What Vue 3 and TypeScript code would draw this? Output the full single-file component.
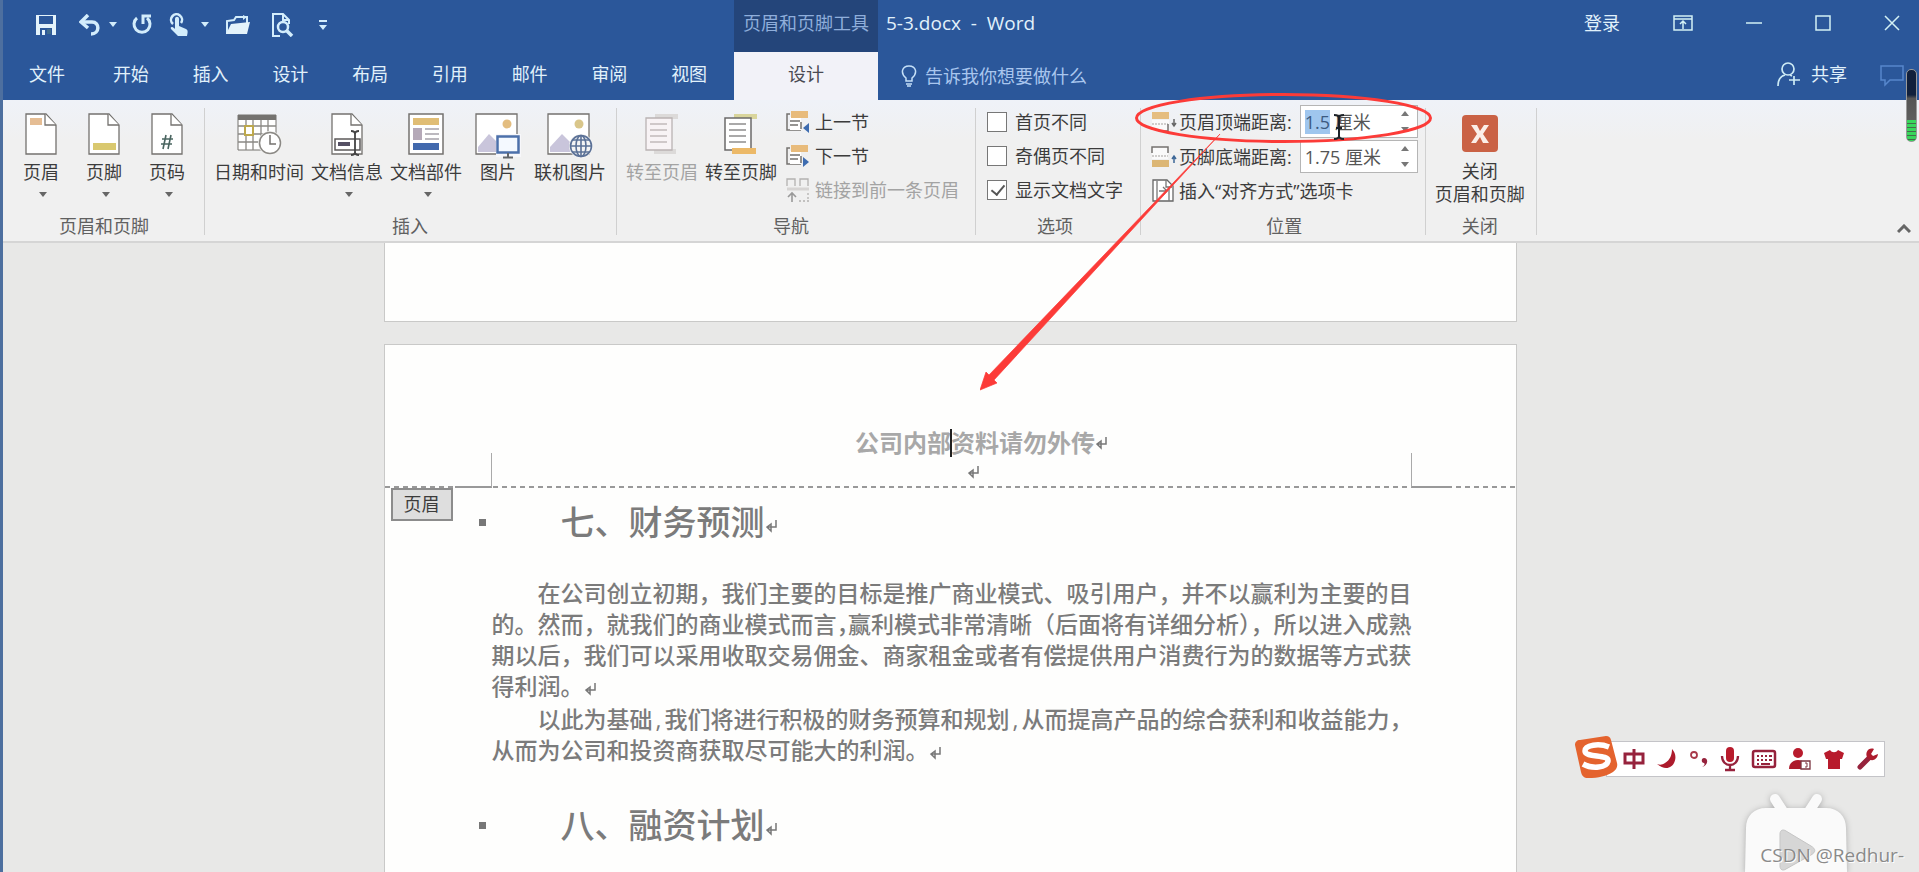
<script setup lang="ts">
import { onMounted, ref } from 'vue'

const tabs: string[] = ['开始', '插入', '设计', '布局', '引用', '邮件', '审阅', '视图']
const headerDistance = ref('1.5 厘米')
const footerDistance = ref('1.75 厘米')
const firstDifferent = ref(false)
const oddEvenDifferent = ref(false)
const showText = ref(true)
const headerInput = ref<HTMLInputElement | null>(null)

function step(value: string, delta: number): string {
  return `${Math.round((parseFloat(value) + delta) * 100) / 100} 厘米`
}

onMounted(() => {
  headerInput.value?.focus()
  headerInput.value?.setSelectionRange(0, 3)
})
</script>

<template>
  <div class="app">
    <header class="top">
      <div class="quick">
        <button class="tool save" aria-label="保存">
          <svg width="22" height="22" viewBox="0 0 22 22"><path d="M1 1h20v20H1z" fill="#e4f3fb" /><path d="M4 2h14v8H4zM5 14h12v7H5z" fill="#2b579a" /><path d="M7 16h3v5H7z" fill="#e4f3fb" /><path d="M12 15h4v5h-4z" fill="#3f6a8c" /></svg>
        </button>
        <button class="tool undo" aria-label="撤消">
          <svg width="22" height="22" viewBox="0 0 22 22" fill="none" stroke="#d3edfc" stroke-width="3.500"><path d="M2 8h11c8 0 8 12-1 12" /><path d="M9 1L2 8l7 6" /></svg>
        </button>
        <button class="tool" aria-label="撤消选项"><svg width="10" height="6" viewBox="0 0 10 6"><path d="M1 0h8L5 5z" fill="#d3edfc" /></svg></button>
        <button class="tool redo" aria-label="重复">
          <svg width="22" height="22" viewBox="0 0 22 22" fill="none" stroke="#d3edfc" stroke-width="3"><path d="M6 4a8 8 0 1 0 10 0" /><path d="M12 10V2h8" /></svg>
        </button>
        <button class="tool touch" aria-label="触摸/鼠标模式">
          <svg width="20" height="24" viewBox="0 0 20 24"><path d="M4 11a5.500 5.500 0 1 1 8-1" fill="none" stroke="#d3edfc" stroke-width="2.500" /><path d="M6 6c0-3 4-3 4 0v7l7 3c2 1 2 3 1 7H9l-7-7c-1-2 1-3 4 0z" fill="#d3edfc" /></svg>
        </button>
        <button class="tool" aria-label="触摸选项"><svg width="10" height="6" viewBox="0 0 10 6"><path d="M1 0h8L5 5z" fill="#d3edfc" /></svg></button>
        <button class="tool open" aria-label="打开">
          <svg width="26" height="22" viewBox="0 0 26 22"><path d="M2 20V7l7-1 2-3h11v6" fill="none" stroke="#d3edfc" stroke-width="2" /><path d="M6 10l19-2-3 12H1z" fill="#e4f3fb" /><path d="M18 1l4 2-4 3" fill="#d3edfc" /></svg>
        </button>
        <button class="tool preview" aria-label="打印预览">
          <svg width="24" height="24" viewBox="0 0 24 24" fill="none" stroke="#d3edfc" stroke-width="2"><path d="M9 23H2V1h10l6 6v4M12 1v6h6" /><circle cx="12" cy="14" r="5" stroke-width="2.500" /><path d="M16 18l5 5" stroke-width="3.500" /></svg>
        </button>
        <button class="tool" aria-label="自定义快速访问工具栏"><svg width="10" height="12" viewBox="0 0 10 12"><path d="M1 1h8v2H1zM1 6h8l-4 5z" fill="#d3edfc" /></svg></button>
      </div>
      <div class="context">页眉和页脚工具</div>
      <div class="caption">
        <span class="doc-name">5-3.docx&nbsp; -&nbsp; Word</span>
        <button class="login">登录</button>
        <button class="win" aria-label="功能区显示选项"><svg width="20" height="16" viewBox="0 0 20 16" fill="none" stroke="#d3f1f5" stroke-width="1.500"><path d="M1 1h18v14H1zM1 4h18M10 14V6M7 9l3-3 3 3" /></svg></button>
        <button class="win" aria-label="最小化"><svg width="16" height="16" viewBox="0 0 16 16"><path d="M0 8h16" stroke="#d3f1f5" stroke-width="1.500" /></svg></button>
        <button class="win" aria-label="最大化"><svg width="16" height="16" viewBox="0 0 16 16"><path d="M1 1h14v14H1z" fill="none" stroke="#d3f1f5" stroke-width="1.500" /></svg></button>
        <button class="win" aria-label="关闭窗口"><svg width="16" height="16" viewBox="0 0 16 16"><path d="M1 1l14 14M15 1L1 15" stroke="#d3f1f5" stroke-width="1.500" /></svg></button>
      </div>

      <nav class="tabs">
        <button class="tab file">文件</button>
        <div class="tab-row">
          <button v-for="tab in tabs" :key="tab" class="tab">{{ tab }}</button>
        </div>
      </nav>
      <button class="tab active">设计</button>
      <div class="tell-row">
        <button class="tell">
          <svg width="16" height="22" viewBox="0 0 16 22" fill="none" stroke="#c5e0f8" stroke-width="1.500"><path d="M5 16v-3C-1 8 1 1 8 1s9 7 3 12v3zM5 19h6M6 21h4" /></svg>
          告诉我你想要做什么
        </button>
        <button class="share">
          <svg width="24" height="24" viewBox="0 0 24 24" fill="none" stroke="#cdebf5" stroke-width="1.700"><circle cx="11" cy="7" r="6" /><path d="M1 24c0-7 3-10 7-11M13 13l2 1M17 14v9M12 18h11" /></svg>
          共享
        </button>
        <button class="comment" aria-label="批注"><svg width="24" height="22" viewBox="0 0 24 22"><path d="M1 1h22v14H10l-5 5v-5H1z" fill="none" stroke="#5787cc" stroke-width="1.500" /></svg></button>
      </div>
    </header>

    <section class="ribbon">
      <div class="group g-hf">
        <div class="body">
          <button class="big">
            <svg width="32" height="42" viewBox="0 0 32 42"><path d="M1 1h20l10 11v29H1z" fill="#fff" stroke="#74726f" stroke-width="1.300" /><path d="M20 1v11h11" fill="#fff" stroke="#74726f" stroke-width="1.300" /><path d="M5 5h12v7H5z" fill="#e5bd94" /></svg>
            <span>页眉</span><i class="caret"></i>
          </button>
          <button class="big">
            <svg width="32" height="42" viewBox="0 0 32 42"><path d="M1 1h20l10 11v29H1z" fill="#fff" stroke="#74726f" stroke-width="1.300" /><path d="M20 1v11h11" fill="#fff" stroke="#74726f" stroke-width="1.300" /><path d="M5 30h23v7H5z" fill="#d9c86f" /></svg>
            <span>页脚</span><i class="caret"></i>
          </button>
          <button class="big">
            <svg width="32" height="42" viewBox="0 0 32 42"><path d="M1 1h20l10 11v29H1z" fill="#fff" stroke="#74726f" stroke-width="1.300" /><path d="M20 1v11h11" fill="#fff" stroke="#74726f" stroke-width="1.300" /><path d="M15 22l-3 14M20 22l-3 14M11 26h11M10 31h11" stroke="#4a6560" stroke-width="1.600" /></svg>
            <span>页码</span><i class="caret"></i>
          </button>
        </div>
        <div class="title">页眉和页脚</div>
      </div>

      <div class="group g-insert">
        <div class="body">
          <button class="big">
            <svg width="44" height="42" viewBox="0 0 44 42"><path d="M1 2h38v35H1z" fill="#fff" stroke="#74726f" /><path d="M1 2h38v5H1z" fill="#74726f" /><path d="M9 7v30M16 7v30M24 7v30M31 7v30M1 13h38M1 21h38M1 29h38" stroke="#8b8985" stroke-width="1.300" /><path d="M8 13h8v9H8z" fill="#fff" stroke="#bda84c" stroke-width="2" /><circle cx="33" cy="30" r="12" fill="#f2f2f0" /><circle cx="33" cy="30" r="10.500" fill="#fff" stroke="#8b8985" stroke-width="1.500" /><path d="M33 22v9h6" fill="none" stroke="#74726f" stroke-width="1.500" /></svg>
            <span>日期和时间</span>
          </button>
          <button class="big">
            <svg width="32" height="42" viewBox="0 0 32 42"><path d="M1 1h20l10 11v29H1z" fill="#fff" stroke="#74726f" stroke-width="1.300" /><path d="M20 1v11h11" fill="#fff" stroke="#74726f" stroke-width="1.300" /><path d="M4 26h25v11H4z" fill="#fff" stroke="#5c5a5a" stroke-width="1.500" /><path d="M7 29h12v4H7z" fill="#555064" /><path d="M24 20v20M20 18c3 0 4 1 4 3 0-2 1-3 4-3M20 42c3 0 4-1 4-3 0 2 1 3 4 3" fill="none" stroke="#444" stroke-width="1.800" /></svg>
            <span>文档信息</span><i class="caret"></i>
          </button>
          <button class="big">
            <svg width="36" height="42" viewBox="0 0 36 42"><path d="M1 1h34v40H1z" fill="#fff" stroke="#74726f" stroke-width="1.500" /><path d="M5 5h26v7H5z" fill="#e0bd75" /><path d="M5 15h9v12H5z" fill="#b5a9b8" /><path d="M17 16h14M17 21h14M17 26h14" stroke="#a6a3aa" stroke-width="1.500" /><path d="M5 30h26v7H5z" fill="#4269ad" /></svg>
            <span>文档部件</span><i class="caret"></i>
          </button>
          <button class="big">
            <svg width="46" height="46" viewBox="0 0 46 46"><path d="M1 1h41v40H1z" fill="#fff" stroke="#74726f" stroke-width="1.300" /><circle cx="32" cy="11" r="4.500" fill="#e3bd80" /><path d="M3 39V34L14 21l9 9v9z" fill="#c9c5db" /><path d="M21 21h25v23H21z" fill="#f7f7fa" /><path d="M22.500 23.500h21v16h-21z" fill="#f4f9ff" stroke="#4c70aa" stroke-width="2.500" /><path d="M33 40v4M28 44.500h10" stroke="#63666a" stroke-width="2" /></svg>
            <span>图片</span>
          </button>
          <button class="big">
            <svg width="46" height="46" viewBox="0 0 46 46"><path d="M1 1h41v40H1z" fill="#fff" stroke="#74726f" stroke-width="1.300" /><circle cx="32" cy="11" r="4.500" fill="#d9c68a" /><path d="M3 39V34L15 21l12 12v6z" fill="#c9c5db" /><circle cx="34" cy="33" r="12" fill="#f4f4f4" /><g fill="none" stroke="#5b7197" stroke-width="1.600"><circle cx="34" cy="33" r="10.500" /><ellipse cx="34" cy="33" rx="5" ry="10.500" /><path d="M23.500 33h21M34 22.500v21M25.500 27h17M25.500 39h17" /></g></svg>
            <span>联机图片</span>
          </button>
        </div>
        <div class="title">插入</div>
      </div>

      <div class="group g-nav">
        <div class="body">
          <button class="big" disabled>
            <svg width="34" height="42" viewBox="0 0 34 42"><path d="M10 1h23v5H10zM9 36h22v5H9z" fill="#dcdad9" /><path d="M1 5h26v32H1z" fill="#f8f3f5" stroke="#b9b3b3" stroke-width="1.300" /><path d="M5 11h17M5 17h17M5 23h17M5 29h17" stroke="#c1bbbb" stroke-width="1.300" /></svg>
            <span>转至页眉</span>
          </button>
          <button class="big">
            <svg width="34" height="42" viewBox="0 0 34 42"><path d="M10 1h23v5H10z" fill="#d9d59c" /><path d="M1 5h26v32H1z" fill="#fff" stroke="#6b6969" stroke-width="1.500" /><path d="M5 11h17M5 17h17M5 23h17M5 29h17" stroke="#8f8d8d" stroke-width="1.300" /><path d="M8 35h24v6H8z" fill="#ecb968" /></svg>
            <span>转至页脚</span>
          </button>
          <div class="rows nav-rows">
            <button class="small">
              <svg width="24" height="24" viewBox="0 0 24 24"><path d="M4 4H1v16h14" fill="none" stroke="#74726f" stroke-width="1.500" /><path d="M4 7h11v13H4z" fill="#fff" /><path d="M4 11h10M4 15h8M15 12v7" stroke="#74726f" stroke-width="1.500" /><path d="M5 1h17v7H5z" fill="#e8bb7b" /><path d="M23 13v10l-6-5z" fill="#3e6cb0" /></svg>
              上一节
            </button>
            <button class="small">
              <svg width="24" height="24" viewBox="0 0 24 24"><path d="M4 4H1v16h14" fill="none" stroke="#74726f" stroke-width="1.500" /><path d="M4 7h11v13H4z" fill="#fff" /><path d="M4 11h10M4 15h8M15 12v7" stroke="#74726f" stroke-width="1.500" /><path d="M5 1h17v7H5z" fill="#e8bb7b" /><path d="M17 13v10l6-5z" fill="#3e6cb0" /></svg>
              下一节
            </button>
            <button class="small" disabled>
              <svg width="24" height="26" viewBox="0 0 24 26" fill="none" stroke="#b3b1b0" stroke-width="1.300"><path d="M1 9V2h8v7M14 9V2h8v7" /><path d="M1 12h22" stroke="#d6d4d3" stroke-width="3" /><path d="M6 25v-8M2 20l4-4 4 4" stroke="#999" stroke-width="1.600" /><path d="M13 24h10M22 16v8" stroke-dasharray="2 2" /></svg>
              链接到前一条页眉
            </button>
          </div>
        </div>
        <div class="title">导航</div>
      </div>

      <div class="group g-opt">
        <div class="body">
          <div class="rows">
            <label class="check"><input v-model="firstDifferent" type="checkbox" />首页不同</label>
            <label class="check"><input v-model="oddEvenDifferent" type="checkbox" />奇偶页不同</label>
            <label class="check"><input v-model="showText" type="checkbox" />显示文档文字</label>
          </div>
        </div>
        <div class="title">选项</div>
      </div>

      <div class="group g-pos">
        <div class="body">
          <div class="rows">
            <div class="field">
              <label for="header-distance">
                <svg width="26" height="24" viewBox="0 0 26 24"><path d="M1 2h17v7H1z" fill="#e5bd80" /><path d="M1 10h17v11H1z" fill="#fafafa" /><path d="M1 14h16" stroke="#a5a29f" stroke-dasharray="2 1" /><path d="M17 14v7h-4" fill="none" stroke="#74726f" stroke-width="1.500" /><path d="M23 9v7M21 13l2 3 2-3" fill="none" stroke="#666" stroke-width="1.500" /></svg>
                页眉顶端距离:
              </label>
              <div class="spin">
                <input id="header-distance" ref="headerInput" v-model="headerDistance" type="text" />
                <div class="arrows">
                  <button aria-label="增大页眉距离" @click="headerDistance = step(headerDistance, 0.1)"><i class="up"></i></button>
                  <button aria-label="减小页眉距离" @click="headerDistance = step(headerDistance, -0.1)"><i class="down"></i></button>
                </div>
              </div>
            </div>
            <div class="field">
              <label for="footer-distance">
                <svg width="26" height="24" viewBox="0 0 26 24"><path d="M1 2h16v12H1z" fill="#fafafa" /><path d="M1 8V2h16v6" fill="none" stroke="#74726f" stroke-width="1.500" /><path d="M1 11h16" stroke="#a5a29f" stroke-dasharray="2 1" /><path d="M1 15h17v7H1z" fill="#dcb674" /><path d="M23 18v-7M21 14l2-3 2 3" fill="none" stroke="#3d6797" stroke-width="1.500" /></svg>
                页脚底端距离:
              </label>
              <div class="spin">
                <input id="footer-distance" v-model="footerDistance" type="text" />
                <div class="arrows">
                  <button aria-label="增大页脚距离" @click="footerDistance = step(footerDistance, 0.1)"><i class="up"></i></button>
                  <button aria-label="减小页脚距离" @click="footerDistance = step(footerDistance, -0.1)"><i class="down"></i></button>
                </div>
              </div>
            </div>
            <button class="small align">
              <svg width="26" height="24" viewBox="0 0 26 24"><path d="M2 1h14l6 6v15H2z" fill="#fff" stroke="#666" stroke-width="1.300" /><path d="M15 1v7h6M6 2v20M18 8v14M8 12h7M12 8l4 4-4 4" fill="none" stroke="#777" stroke-width="1.300" /></svg>
              插入“对齐方式”选项卡
            </button>
          </div>
        </div>
        <div class="title">位置</div>
      </div>

      <div class="group g-close">
        <div class="body">
          <button class="big close">
            <svg width="36" height="42" viewBox="0 0 36 42"><rect y="2" width="36" height="37" rx="4" fill="#ca6245" /><path d="M9 12h6l3 6 4-6h5l-6 9 6 9h-6l-3-6-4 6H9l6-9z" fill="#fbeee8" /></svg>
            <span>关闭</span><span>页眉和页脚</span>
          </button>
        </div>
        <div class="title">关闭</div>
      </div>
      <button class="collapse" aria-label="折叠功能区"><svg width="14" height="10" viewBox="0 0 14 10"><path d="M1 8l6-6 6 6" fill="none" stroke="#666" stroke-width="3" /></svg></button>
    </section>

    <main class="canvas">
      <article class="page previous"></article>
      <article class="page current">
        <div class="head-area">
          <p class="head-text">公司内部<i class="cursor"></i>资料请勿外传<svg class="mark" viewBox="0 0 12 12"><path d="M11 0v7H3M6 4L2 7l4 4V4z" /></svg></p>
          <p class="head-blank"><svg class="mark" viewBox="0 0 12 12"><path d="M11 0v7H3M6 4L2 7l4 4V4z" /></svg></p>
          <i class="corner left"></i><i class="corner right"></i>
        </div>
        <span class="tag">页眉</span>
        <section class="content">
          <h2>七、财务预测<svg class="mark" viewBox="0 0 12 12"><path d="M11 0v7H3M6 4L2 7l4 4V4z" /></svg></h2>
          <div class="prose">
            <p>在公司创立初期，我们主要的目标是推广商业模式、吸引用户，并不以赢利为主要的目<br />的。然而，就我们的商业模式而言<span class="tight">，</span>赢利模式非常清晰（后面将有详细分析），所以进入成熟<br />期以后，我们可以采用收取交易佣金、商家租金或者有偿提供用户消费行为的数据等方式获<br />得利润。<svg class="mark" viewBox="0 0 12 12"><path d="M11 0v7H3M6 4L2 7l4 4V4z" /></svg></p>
            <p>以此为基础<span class="comma">,</span>我们将进行积极的财务预算和规划<span class="comma">,</span>从而提高产品的综合获利和收益能力，<br />从而为公司和投资商获取尽可能大的利润。<svg class="mark" viewBox="0 0 12 12"><path d="M11 0v7H3M6 4L2 7l4 4V4z" /></svg></p>
          </div>
          <h2>八、融资计划<svg class="mark" viewBox="0 0 12 12"><path d="M11 0v7H3M6 4L2 7l4 4V4z" /></svg></h2>
        </section>
      </article>
    </main>

    <svg class="annotation" width="460" height="310" viewBox="980 90 460 310">
      <ellipse cx="1283.500" cy="118" rx="147" ry="23.500" fill="none" stroke="#fc3b38" stroke-width="3" />
      <path d="M1220 134L989 375l-3-3-6 18 17-7-3-3z" fill="#fc3b38" stroke="#fc3b38" stroke-width=".7" />
      <path d="M1334 115c3 0 5 1 5 3v18c0 2-2 3-5 3M1344 115c-3 0-5 1-5 3M1339 136c0 2 2 3 5 3M1336 128h6" fill="none" stroke="#1d2228" stroke-width="2" />
    </svg>

    <div class="meter"><i></i></div>

    <div class="ime">
      <svg class="sogou" width="44" height="42" viewBox="0 0 44 42"><path d="M5 4l26-4c3 0 4 1 5 4l6 23c1 4-1 7-4 9-7 4-14 6-25 6-4 0-6-2-7-6L0 9C0 6 2 4 5 4z" fill="#e4632e" /><path d="M34 11c-10-4-24-2-24 4 0 7 24 3 23 10-1 7-16 8-25 3" fill="none" stroke="#fff" stroke-width="5.500" /></svg>
      <svg width="22" height="22" viewBox="0 0 22 22" fill="none" stroke="#96223c" stroke-width="3"><path d="M2 6h18v9H2zM11 1v20" /></svg>
      <svg width="22" height="22" viewBox="0 0 22 22"><path d="M16 1c9 9-1 27-15 15 3 1 5 1 8-1 5-3 7-8 7-14z" fill="#ad1b2c" /></svg>
      <svg width="20" height="22" viewBox="0 0 20 22"><circle cx="5" cy="7" r="3" fill="none" stroke="#a83a4a" stroke-width="1.800" /><path d="M13 19c3-2 3-3 2-4-3 0-3-5 0-5 5 0 4 8-2 9z" fill="#96223c" /></svg>
      <svg width="20" height="26" viewBox="0 0 20 26"><rect x="6" y="1" width="8" height="15" rx="4" fill="#b81b2c" /><path d="M2 10c0 12 16 12 16 0M10 19v5M5 24h10" fill="none" stroke="#96223c" stroke-width="2.300" /></svg>
      <svg width="26" height="22" viewBox="0 0 26 22"><rect x="2" y="3" width="22" height="16" rx="2" fill="none" stroke="#96223c" stroke-width="2.500" /><path d="M6 8h2m2 0h2m2 0h2m2 0h3M6 12h2m2 0h2m2 0h2m2 0h3M6 16h2m2 0h9" stroke="#96223c" stroke-width="2" /></svg>
      <svg width="24" height="24" viewBox="0 0 24 24"><circle cx="10" cy="6" r="5" fill="#b81b2c" /><path d="M1 22c0-12 18-12 18 0z" fill="#ad1b2c" /><path d="M13 14h9v8h-9z" fill="#fff" stroke="#7a3440" stroke-width="1.300" /><path d="M17 16h2v4h-2" fill="none" stroke="#7a3440" /></svg>
      <svg width="22" height="22" viewBox="0 0 22 22"><path d="M7 2c2 3 6 3 8 0l6 3-2 6h-2v10H5V11H3L1 5z" fill="#b81b2c" /></svg>
      <svg width="24" height="24" viewBox="0 0 24 24"><path d="M4 20L14 10" stroke="#96223c" stroke-width="5" stroke-linecap="round" /><path d="M18 2c-6-2-9 4-7 8 3 5 10 4 11-3l-5 2-2-2z" fill="#ad1b2c" /></svg>
    </div>

    <svg class="tv" width="110" height="82" viewBox="0 0 110 82"><g stroke="#fafafa" stroke-width="10" stroke-linecap="round"><path d="M35 9l9 14M77 9l-9 14" /></g><path d="M26 18h60c12 0 20 8 20 20l1 44H5l1-44c0-12 8-20 20-20z" fill="#fafafa" /><path d="M40 44c0-4 3-5 6-3l25 15c5 3 5 6 0 9L46 79c-3 2-6 1-6-3z" fill="#d6d6d6" stroke="#c5c5c5" /></svg>
    <div class="watermark">CSDN @Redhur-</div>
  </div>
</template>

<style>
body { margin: 0; background: #e8e8e7; }
</style>

<style scoped>
* { box-sizing: border-box; }
button { border: 0; padding: 0; background: none; font: inherit; color: inherit; white-space: nowrap; }
svg { display: block; flex: none; }
.app { position: relative; display: flex; flex-direction: column; height: 100vh; overflow: hidden; border-left: 3px solid #4d6f9f; background: #e8e8e7; font: 18px/24px "Open Sans", "Noto Sans CJK SC", sans-serif; color: #3c3c3c; }

.top { display: grid; grid-template-columns: 731px 144px 1fr; grid-template-rows: 52px 48px; background: #2b579a; color: #e1f1fb; }
.quick { display: flex; align-items: center; padding-left: 32px; padding-bottom: 2px; }
.undo { margin-left: 22px; margin-right: 7px; }
.redo { margin-left: 13px; }
.touch { margin-left: 16px; margin-right: 11px; }
.open { margin-left: 15px; }
.preview { margin-left: 20px; margin-right: 23px; }
.context { background: #24457a; color: #8faedb; text-align: center; line-height: 46px; }
.caption { display: flex; align-items: center; padding: 0 19px 7px 8px; }
.doc-name { font-size: 19px; margin-right: auto; }
.login { margin-right: 53px; }
.win + .win { margin-left: 53px; }
.tabs { display: flex; padding-bottom: 4px; }
.file { width: 88px; }
.tab-row { display: grid; flex: 1; grid-template-columns: repeat(8, 1fr); padding-right: 5px; }
.active { background: #f2f2f8; color: #4a4a52; padding-bottom: 4px; }
.tell-row { display: flex; align-items: center; padding-right: 15px; }
.tell { display: flex; align-items: center; gap: 8px; padding-left: 23px; margin-right: auto; color: #a9c6ee; }
.share { display: flex; align-items: center; gap: 10px; margin-right: 33px; padding-bottom: 4px; }

.ribbon { position: relative; display: flex; height: 143px; padding-top: 5px; background: linear-gradient(#eff2f8, #f0f0f0 40px); border-bottom: 2px solid #d5d5d5; }
.group { position: relative; display: flex; flex-direction: column; }
.group::after { content: ""; position: absolute; right: 0; top: 3px; bottom: 6px; width: 1px; background: #d0d0d0; }
.body { display: flex; height: 109px; }
.title { text-align: center; color: #606060; }
.g-hf { padding: 0 7px; }
.g-insert { padding: 0 8px 0 6px; }
.g-insert .big { min-width: 64px; }
.g-nav { padding: 0 17px 0 6px; }
.g-opt { padding: 0 18px 0 11px; }
.g-pos { padding: 0 8px 0 10px; }
.g-close { padding: 0 9px 0 6px; }
.big { display: flex; flex-direction: column; align-items: center; min-width: 62px; padding: 8px 3px 0; }
.big + .big { margin-left: 1px; }
.big svg { height: 46px; margin-bottom: 1px; overflow: visible; }
.big svg[height="42"] { height: 42px; margin-bottom: 5px; }
.big.close span { line-height: 23px; }
.big:disabled, .small:disabled { color: #a3a3a3; }
.caret { margin: 8px 0 0 3px; border: 4px solid transparent; border-top: 5px solid #666; border-bottom: 0; }
.rows { display: flex; flex-direction: column; }
.nav-rows { margin-left: 6px; }
.small { display: flex; align-items: center; gap: 5px; height: 34px; }
.small.align { gap: 2px; height: 32px; }
.check { display: flex; align-items: center; gap: 8px; height: 34px; }
.check input { appearance: none; position: relative; width: 20px; height: 20px; margin: 0; border: 1px solid #777; background: #fff; }
.check input:checked::after { content: ""; position: absolute; left: 6px; top: 1px; width: 6px; height: 11px; border: solid #555; border-width: 0 2px 2px 0; transform: rotate(40deg); }
.field { display: flex; justify-content: space-between; height: 35px; }
.field label { display: flex; align-items: center; gap: 2px; height: 33px; margin-right: 8px; }
.spin { display: flex; width: 118px; height: 33px; border: 1px solid #b5b5b5; background: #fff; }
.spin input { flex: 1; min-width: 0; border: 0; padding: 0 0 0 4px; outline: 0; background: none; font: inherit; color: #555; }
.spin input::selection { background: #9fc6ee; color: #3c5a80; }
.arrows { display: flex; flex-direction: column; justify-content: space-around; width: 24px; }
.arrows button { display: flex; justify-content: center; align-items: center; height: 14px; }
.up, .down { border: 4px solid transparent; }
.up { border-bottom: 5px solid #777; border-top: 0; }
.down { border-top: 5px solid #777; border-bottom: 0; }
.collapse { position: absolute; right: 8px; bottom: 7px; }

.canvas { display: flex; flex: 1; flex-direction: column; align-items: center; gap: 22px; min-height: 0; padding-right: 22px; }
.page { width: 100%; max-width: 1133px; background: #fefefd; border: 1px solid #c9c9c8; }
.previous { flex: none; height: 79px; border-top: 0; }
.current { flex: 1; min-height: 0; border-bottom: 0; }
.head-area { position: relative; height: 143px; padding-top: 83px; background: repeating-linear-gradient(90deg, #999 0 5px, transparent 5px 9px) bottom / 100% 2px no-repeat; }
.head-text { display: flex; justify-content: center; align-items: center; margin: 0; padding-left: 62px; font-size: 24px; line-height: 30px; font-weight: 700; color: #a8a8a8; }
.cursor { width: 2px; height: 28px; margin: 0 -1px; background: #222; z-index: 1; }
.head-blank { display: flex; justify-content: center; margin: 8px 0 0; padding-left: 46px; }
.mark { display: inline-block; width: 12px; height: 12px; overflow: visible; }
.mark path { stroke: #777; stroke-width: 1.5; fill: none; }
.corner { position: absolute; bottom: 0; width: 37px; height: 35px; border-bottom: 2px solid #999; }
.corner.left { left: 70px; border-right: 1px solid #aaa; }
.corner.right { right: 68px; border-left: 1px solid #aaa; }
.tag { display: block; width: 62px; height: 33px; margin-left: 6px; margin-bottom: -33px; border: 2px solid #8c8c8c; background: #dedede; line-height: 29px; text-align: center; }
.content { padding: 11px 107px 0; color: #7b7b7b; }
h2 { display: flex; align-items: center; margin: 0; font-size: 34px; line-height: 46px; font-weight: 500; }
h2::before { content: ""; width: 7px; height: 7px; margin: 0 75px 0 -13px; background: #777; }
h2 .mark { margin-top: 8px; }
.prose { padding: 33px 0 36px; font-size: 23px; line-height: 31px; font-weight: 500; }
.prose p { margin: 0; text-indent: 46px; white-space: nowrap; }
.prose p + p { margin-top: 2px; }
.tight { font-feature-settings: "halt"; }
.comma { display: inline-block; width: 12px; text-indent: 3px; }

.annotation { position: absolute; left: 977px; top: 90px; pointer-events: none; }
.meter { position: absolute; right: 2px; top: 69px; width: 11px; height: 73px; border: 1px solid #9a9a9a; border-radius: 5px; background: linear-gradient(#11203c 35%, #555 40%, #666); overflow: hidden; }
.meter i { position: absolute; inset: 50px 0 0; background: repeating-linear-gradient(#39d65c 0 3px, #456b4c 3px 4px); }
.ime { position: absolute; right: 34px; bottom: 95px; display: flex; align-items: center; gap: 11px; height: 36px; width: 279px; padding-right: 4px; justify-content: flex-end; background: #fff; border: 1px solid #c4c4c8; }
.sogou { position: absolute; left: -32px; top: -6px; }
.tv { position: absolute; right: 69px; bottom: 0; filter: drop-shadow(0 1px 3px #aaa); }
.watermark { position: absolute; right: 15px; bottom: 5px; font-size: 19px; color: #8a8a8a; text-shadow: 1px 1px 0 #fff; }
</style>
